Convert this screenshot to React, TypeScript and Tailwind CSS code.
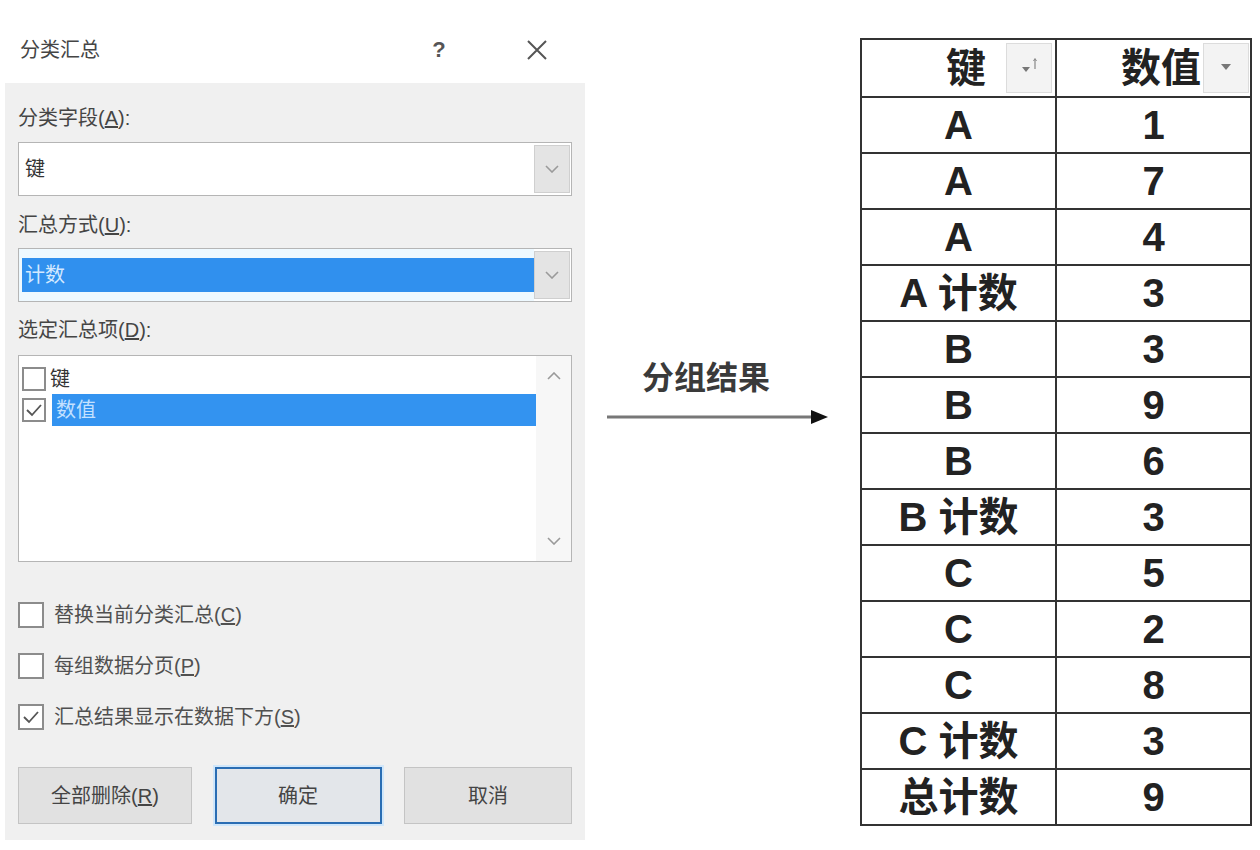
import React from "react";

const cjk = { fontFamily: '"Liberation Sans", "Noto Sans CJK SC", sans-serif' };
const tableFont = {
  fontFamily: '"Liberation Sans Narrow", "Liberation Sans", "Noto Sans CJK SC", sans-serif',
};

function Chevron({ up = false }: { up?: boolean }) {
  return (
    <svg width="14" height="8" viewBox="0 0 14 8">
      <path
        d={up ? "M1 7 L7 1 L13 7" : "M1 1 L7 7 L13 1"}
        fill="none"
        stroke="#9a9a9a"
        strokeWidth="1.6"
      />
    </svg>
  );
}

function CheckMark() {
  return (
    <svg width="18" height="16" viewBox="0 0 18 16">
      <path d="M2 8 L7 13 L16 3" fill="none" stroke="#555" strokeWidth="1.8" />
    </svg>
  );
}

function Box({ checked, size = 26 }: { checked?: boolean; size?: number }) {
  return (
    <div
      className="flex items-center justify-center border-2 border-[#8c8c8c] bg-white shrink-0"
      style={{ width: size, height: size }}
    >
      {checked ? <CheckMark /> : null}
    </div>
  );
}

function Dialog() {
  return (
    <div className="w-[590px] flex flex-col text-[#454545]" style={cjk}>
      <div className="h-[83px] flex items-start pt-[36px] pl-[20px] pr-[33px]">
        <div className="text-[20px] leading-[28px]">分类汇总</div>
        <div className="ml-auto w-[40px] h-[28px] flex items-center justify-center text-[22px] leading-[28px] text-[#555] font-bold">
          ?
        </div>
        <div className="ml-[58px] w-[40px] h-[28px] flex items-center justify-center">
          <svg width="22" height="22" viewBox="0 0 22 22">
            <path d="M2 2 L20 20 M20 2 L2 20" stroke="#555" strokeWidth="2" />
          </svg>
        </div>
      </div>
      <div className="ml-[5px] w-[580px] h-[757px] bg-[#f0f0f0] pl-[13px] pt-[21px] flex flex-col">
        <div className="text-[20px] leading-[28px]">
          分类字段(<span className="underline">A</span>):
        </div>
        <div className="mt-[10px] w-[554px] h-[54px] border border-[#b5b5b5] bg-white flex">
          <div className="flex-1 flex items-center pl-[6px] text-[20px] text-[#333]">键</div>
          <div className="w-[36px] my-[2px] mr-[1px] bg-[#e4e4e4] border border-[#cfcfcf] flex items-center justify-center">
            <Chevron />
          </div>
        </div>
        <div className="mt-[15px] text-[20px] leading-[28px]">
          汇总方式(<span className="underline">U</span>):
        </div>
        <div className="mt-[9px] w-[554px] h-[54px] border border-[#b5b5b5] bg-white flex">
          <div className="flex-1 flex flex-col justify-center pl-[3px] bg-[#eef9ff]">
            <div className="h-[34px] bg-[#3090ee] flex items-center pl-[3px] text-[20px] text-[#d4e9ff]">
              计数
            </div>
          </div>
          <div className="w-[36px] my-[2px] mr-[1px] bg-[#e4e4e4] border border-[#cfcfcf] flex items-center justify-center">
            <Chevron />
          </div>
        </div>
        <div className="mt-[14px] text-[20px] leading-[28px]">
          选定汇总项(<span className="underline">D</span>):
        </div>
        <div className="mt-[11px] w-[554px] h-[207px] border border-[#b5b5b5] bg-white flex">
          <div className="flex-1 flex flex-col pl-[3px] pt-[8px]">
            <div className="h-[30px] flex items-center">
              <Box size={24} />
              <span className="ml-[4px] text-[20px] text-[#333]">键</span>
            </div>
            <div className="h-[32px] flex items-center">
              <Box checked size={24} />
              <div className="flex-1 h-[32px] ml-[6px] bg-[#3393f0] flex items-center pl-[4px] text-[20px] text-[#c4e1ff]">
                数值
              </div>
            </div>
          </div>
          <div className="w-[35px] bg-[#f7f7f7] flex flex-col items-center justify-between py-[16px]">
            <Chevron up />
            <Chevron />
          </div>
        </div>
        <div className="mt-[38px] flex flex-col gap-[21px]">
          {[
            { t: "替换当前分类汇总(", k: "C", c: false },
            { t: "每组数据分页(", k: "P", c: false },
            { t: "汇总结果显示在数据下方(", k: "S", c: true },
          ].map((r, i) => (
            <div key={i} className="h-[30px] flex items-center">
              <Box checked={r.c} />
              <span className="ml-[10px] text-[20px] text-[#505050]">
                {r.t}
                <span className="underline">{r.k}</span>)
              </span>
            </div>
          ))}
        </div>
        <div className="mt-[35px] flex w-[554px] justify-between">
          <div className="w-[174px] h-[57px] bg-[#e1e1e1] border border-[#c4c4c4] flex items-center justify-center text-[20px] text-[#444]">
            全部删除(<span className="underline">R</span>)
          </div>
          <div className="w-[167px] h-[57px] bg-[#e3e6ea] border-2 border-[#2a6db3] flex items-center justify-center text-[20px] text-[#444] shadow-[0_0_0_2px_#cfe6fa]">
            确定
          </div>
          <div className="w-[168px] h-[57px] bg-[#e1e1e1] border border-[#c4c4c4] flex items-center justify-center text-[20px] text-[#444]">
            取消
          </div>
        </div>
      </div>
    </div>
  );
}

function Middle() {
  return (
    <div className="w-[270px] flex flex-col pt-[358px]" style={cjk}>
      <div className="pl-[52px] text-[32px] leading-[40px] font-bold text-[#3a3a3a]">分组结果</div>
      <div className="mt-[11px] pl-[17px]">
        <svg width="222" height="16" viewBox="0 0 222 16">
          <line x1="0" y1="8" x2="206" y2="8" stroke="#777" strokeWidth="3" />
          <path d="M204 1 L221 8 L204 15 Z" fill="#111" />
        </svg>
      </div>
    </div>
  );
}

function FilterBtn({ sort }: { sort?: boolean }) {
  return (
    <div className="w-[46px] h-[50px] bg-[#f3f3f3] border border-[#dcdcdc] flex items-center justify-center">
      <svg width="30" height="30" viewBox="0 0 30 30">
        {sort ? (
          <>
            <path d="M8 14 L16 14 L12 19 Z" fill="#777" />
            <path d="M21 16 L21 6" stroke="#888" strokeWidth="1.2" />
            <path d="M19.5 8 L21 5.5 L22.5 8" fill="none" stroke="#888" strokeWidth="1" />
          </>
        ) : (
          <path d="M10 11 L20 11 L15 17 Z" fill="#777" />
        )}
      </svg>
    </div>
  );
}

function ResultTable() {
  const rows: [string, string][] = [
    ["A", "1"],
    ["A", "7"],
    ["A", "4"],
    ["A 计数", "3"],
    ["B", "3"],
    ["B", "9"],
    ["B", "6"],
    ["B 计数", "3"],
    ["C", "5"],
    ["C", "2"],
    ["C", "8"],
    ["C 计数", "3"],
    ["总计数", "9"],
  ];
  return (
    <div className="pt-[38px]" style={tableFont}>
      <table className="border-collapse border-2 border-[#333] text-[#222] text-[40px] leading-none font-bold">
        <tbody>
          <tr>
            <td className="w-[195px] h-[58px] border-2 border-[#333] p-0">
              <div className="flex items-center justify-end pr-[3px]">
                <span className="mr-[20px]">键</span>
                <FilterBtn sort />
              </div>
            </td>
            <td className="w-[195px] h-[58px] border-2 border-[#333] p-0">
              <div className="flex items-center justify-end pr-[1px]">
                <span className="mr-[2px]">数值</span>
                <FilterBtn />
              </div>
            </td>
          </tr>
          {rows.map((r, i) => (
            <tr key={i}>
              <td className="w-[195px] h-[56px] border-2 border-[#333] p-0 text-center">{r[0]}</td>
              <td className="w-[195px] h-[56px] border-2 border-[#333] p-0 text-center">{r[1]}</td>
            </tr>
          ))}
        </tbody>
      </table>
    </div>
  );
}

export default function App() {
  return (
    <div className="w-[1260px] h-[850px] bg-white flex overflow-hidden">
      <Dialog />
      <Middle />
      <ResultTable />
    </div>
  );
}
